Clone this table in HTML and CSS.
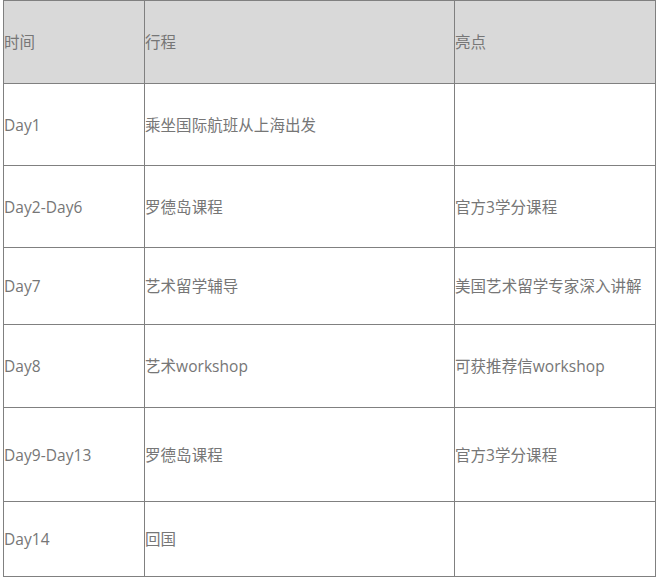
FILE: index.html
```html
<!DOCTYPE html>
<html lang="zh">
<head>
<meta charset="utf-8">
<link rel="stylesheet" href="styles.css">
</head>
<body>
<table class="plan">
  <colgroup>
    <col class="c1"><col class="c2"><col class="c3">
  </colgroup>
  <tr class="head r0"><td>时间</td><td>行程</td><td>亮点</td></tr>
  <tr class="r1"><td>Day1</td><td>乘坐国际航班从上海出发</td><td></td></tr>
  <tr class="r2"><td>Day2-Day6</td><td>罗德岛课程</td><td>官方3学分课程</td></tr>
  <tr class="r3"><td>Day7</td><td>艺术留学辅导</td><td>美国艺术留学专家深入讲解</td></tr>
  <tr class="r4"><td>Day8</td><td>艺术workshop</td><td>可获推荐信workshop</td></tr>
  <tr class="r5"><td>Day9-Day13</td><td>罗德岛课程</td><td>官方3学分课程</td></tr>
  <tr class="r6"><td>Day14</td><td>回国</td><td></td></tr>
</table>
</body>
</html>
```
FILE: styles.css
```css
html, body {
  margin: 0;
  padding: 0;
  background: #ffffff;
}
.plan {
  margin-left: 3px;
  border-collapse: collapse;
  table-layout: fixed;
  width: 652px;
  font-family: "Open Sans", "Noto Sans CJK SC", sans-serif;
  font-size: 15.5px;
  color: #767676;
}
.c1 { width: 141px; }
.c2 { width: 310px; }
.c3 { width: 201px; }
.plan td {
  border: 1px solid #808080;
  padding: 0;
  vertical-align: middle;
  white-space: nowrap;
  letter-spacing: 0.05px;
  line-height: 20px;
}
.head td { background: #d9d9d9; }
.r0 { height: 83px; }
.r1 { height: 82px; }
.r2 { height: 82px; }
.r3 { height: 77px; }
.r4 { height: 83px; }
.r5 { height: 94px; }
.r6 { height: 75px; }
```
